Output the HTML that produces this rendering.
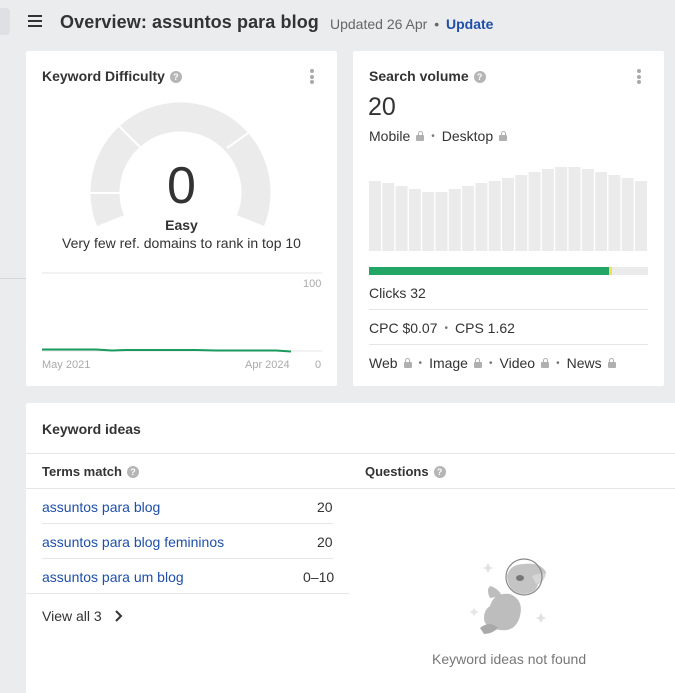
<!DOCTYPE html>
<html><head><meta charset="utf-8"><style>
*{margin:0;padding:0;box-sizing:border-box}
body{width:675px;height:681px;overflow:hidden;background:#ebecee;font-family:"Liberation Sans",Arial,sans-serif;color:#333;position:relative}
.a{position:absolute;white-space:nowrap}
.card{position:absolute;background:#fff;border-radius:2px}
.h{font-weight:bold;font-size:14px;color:#333}
.q{display:inline-block;width:12px;height:12px;border-radius:50%;background:#b5b5b5;color:#fff;font-size:9px;font-weight:bold;text-align:center;line-height:12px;vertical-align:1px;margin-left:5px}
.dots{position:absolute;width:4px}
.dots i{display:block;width:4px;height:4px;border-radius:50%;background:#aaa;margin-bottom:1.5px}
.lk{display:inline-block;width:8px;height:6px;background:#b0b0b0;border-radius:1px;position:relative;margin-left:6px;vertical-align:0}
.lk:before{content:"";position:absolute;left:1.5px;top:-4px;width:3px;height:4px;border:1.3px solid #b0b0b0;border-bottom:none;border-radius:3px 3px 0 0}
.dot{color:#777;margin:0 7px;font-size:10px;vertical-align:2px}
.t14{font-size:14px}
.blue{color:#1f4fa8}
</style></head><body>
<div class="a" style="left:0;top:8px;width:10px;height:27px;background:#dfe0e3;border-radius:0 4px 4px 0"></div>
<div class="a" style="left:0;top:278px;width:26px;height:1px;background:#d5d6d9"></div>
<div class="a" style="left:28px;top:15px;width:14px;height:2px;background:#333;box-shadow:0 5px 0 #333,0 10px 0 #333"></div>
<div class="a" style="left:60px;top:12px;font-size:18px;font-weight:bold;color:#333;letter-spacing:0.1px">Overview: assuntos para blog</div>
<div class="a" style="left:330px;top:16px;font-size:14px;color:#666">Updated 26 Apr <span style="margin:0 3px">•</span> <b style="color:#1f4fa8">Update</b></div>

<div class="card" style="left:26px;top:51px;width:311px;height:335px">
 <div class="a h" style="left:16px;top:17px">Keyword Difficulty<span class="q">?</span></div>
 <div class="dots" style="left:284px;top:18px"><i></i><i></i><i></i></div>
 <svg class="a" style="left:0;top:0" width="311" height="335">
  <path d="M 71 175 A 90 90 0 1 1 238 175 L 211.1 164.2 A 61 61 0 1 0 97.9 164.2 Z" fill="#ebebeb"/>
  <line x1="60" y1="142" x2="96" y2="142" stroke="#fff" stroke-width="2"/>
  <line x1="91" y1="73" x2="114" y2="96" stroke="#fff" stroke-width="2"/>
  <line x1="225" y1="80" x2="201" y2="97" stroke="#fff" stroke-width="2"/>
  <line x1="16" y1="222" x2="296" y2="222" stroke="#e6e6e6"/>
  <line x1="16" y1="300" x2="296" y2="300" stroke="#e6e6e6"/>
  <polyline points="16,298.5 70,298.5 86,299.5 100,299 170,299 190,299.5 250,299.5 265,300.5" fill="none" stroke="#1a9a5c" stroke-width="2"/>
 </svg>
 <div class="a" style="left:0;width:311px;text-align:center;top:105px;font-size:52px;color:#333">0</div>
 <div class="a" style="left:0;width:311px;text-align:center;top:166px;font-size:14px;font-weight:bold">Easy</div>
 <div class="a" style="left:0;width:311px;text-align:center;top:184px;font-size:14px">Very few ref. domains to rank in top 10</div>
 <div class="a" style="left:277px;top:227px;font-size:11px;color:#aaa">100</div>
 <div class="a" style="left:16px;top:308px;font-size:11px;color:#aaa">May 2021</div>
 <div class="a" style="left:219px;top:308px;font-size:11px;color:#aaa">Apr 2024</div>
 <div class="a" style="left:289px;top:308px;font-size:11px;color:#aaa">0</div>
</div>

<div class="card" style="left:353px;top:51px;width:311px;height:335px">
 <div class="a h" style="left:16px;top:17px">Search volume<span class="q">?</span></div>
 <div class="dots" style="left:284px;top:18px"><i></i><i></i><i></i></div>
 <div class="a" style="left:15px;top:42px;font-size:25px;color:#333">20</div>
 <div class="a t14" style="left:16px;top:77px">Mobile<span class="lk"></span><span class="dot">•</span>Desktop<span class="lk"></span></div>
 <svg class="a" style="left:16px;top:100px" width="280" height="110">
  <g fill="#ebebeb">
  <rect x="0" y="30" width="12" height="70"/><rect x="13.3" y="32" width="12" height="68"/><rect x="26.6" y="35" width="12" height="65"/><rect x="39.9" y="38" width="12" height="62"/><rect x="53.2" y="41" width="12" height="59"/><rect x="66.5" y="41" width="12" height="59"/><rect x="79.8" y="38" width="12" height="62"/><rect x="93.1" y="35" width="12" height="65"/><rect x="106.4" y="32" width="12" height="68"/><rect x="119.7" y="30" width="12" height="70"/><rect x="133" y="27" width="12" height="73"/><rect x="146.3" y="24" width="12" height="76"/><rect x="159.6" y="21" width="12" height="79"/><rect x="172.9" y="18" width="12" height="82"/><rect x="186.2" y="16" width="12" height="84"/><rect x="199.5" y="16" width="12" height="84"/><rect x="212.8" y="18" width="12" height="82"/><rect x="226.1" y="21" width="12" height="79"/><rect x="239.4" y="24" width="12" height="76"/><rect x="252.7" y="27" width="12" height="73"/><rect x="266" y="30" width="12" height="70"/>
  </g>
 </svg>
 <div class="a" style="left:16px;top:216px;width:279px;height:8px;background:#ebebeb"></div>
 <div class="a" style="left:16px;top:216px;width:240px;height:8px;background:#22a565"></div>
 <div class="a" style="left:256px;top:216px;width:3px;height:8px;background:#f2df5a"></div>
 <div class="a t14" style="left:16px;top:234px">Clicks 32</div>
 <div class="a" style="left:16px;top:258px;width:279px;height:1px;background:#e6e6e6"></div>
 <div class="a t14" style="left:16px;top:269px">CPC $0.07<span class="dot">•</span>CPS 1.62</div>
 <div class="a" style="left:16px;top:293px;width:279px;height:1px;background:#e6e6e6"></div>
 <div class="a t14" style="left:16px;top:304px">Web<span class="lk"></span><span class="dot">•</span>Image<span class="lk"></span><span class="dot">•</span>Video<span class="lk"></span><span class="dot">•</span>News<span class="lk"></span></div>
</div>

<div class="card" style="left:26px;top:403px;width:660px;height:290px">
 <div class="a h" style="left:16px;top:18px">Keyword ideas</div>
 <div class="a" style="left:0;top:50px;width:660px;height:1px;background:#e6e6e6"></div>
 <div class="a h" style="left:16px;top:61px;font-size:13px">Terms match<span class="q">?</span></div>
 <div class="a h" style="left:339px;top:61px;font-size:13px">Questions<span class="q">?</span></div>
 <div class="a" style="left:0;top:85px;width:660px;height:1px;background:#e6e6e6"></div>
 <div class="a t14 blue" style="left:16px;top:96px">assuntos para blog</div><div class="a t14" style="left:291px;top:96px">20</div>
 <div class="a" style="left:16px;top:120px;width:291px;height:1px;background:#e6e6e6"></div>
 <div class="a t14 blue" style="left:16px;top:131px">assuntos para blog femininos</div><div class="a t14" style="left:291px;top:131px">20</div>
 <div class="a" style="left:16px;top:155px;width:291px;height:1px;background:#e6e6e6"></div>
 <div class="a t14 blue" style="left:16px;top:166px">assuntos para um blog</div><div class="a t14" style="left:277px;top:166px">0–10</div>
 <div class="a" style="left:0;top:190px;width:323px;height:1px;background:#e6e6e6"></div>
 <div class="a t14" style="left:16px;top:205px">View all 3</div>
 <svg class="a" style="left:88px;top:206px" width="10" height="14"><path d="M2 2 L7 7 L2 12" fill="none" stroke="#333" stroke-width="2"/></svg>
 <svg class="a" style="left:440px;top:145px" width="90" height="90">
  <path d="M24 50 Q20 42 24 38 Q32 40 36 48 Z" fill="#bdbdbd"/>
  <path d="M24 58 Q28 44 44 46 Q58 52 54 68 Q50 84 34 82 Q18 80 18 70 Q18 62 24 58 Z" fill="#bdbdbd"/>
  <path d="M14 80 Q24 72 32 80 Q26 86 18 86 Z" fill="#a9a9a9"/>
  <path d="M41 28 Q44 16 58 16 Q74 14 80 24 Q78 34 72 36 Q70 46 56 46 Q42 44 41 28 Z" fill="#c4c4c4"/>
  <path d="M66 28 Q76 24 80 26 Q78 34 70 36 Z" fill="#d6d6d6"/>
  <ellipse cx="54" cy="30" rx="4" ry="3" fill="#777"/>
  <circle cx="58" cy="29" r="18" fill="none" stroke="#888" stroke-width="1.2"/>
  <path d="M22 15 l2 4 4 1 -4 1 -2 4 -2 -4 -4 -1 4 -1z" fill="#e0e0e0"/>
  <path d="M75 65 l2 4 4 1 -4 1 -2 4 -2 -4 -4 -1 4 -1z" fill="#e0e0e0"/>
  <path d="M8 60 l2 3 3 1 -3 1 -2 3 -2 -3 -3 -1 3 -1z" fill="#e6e6e6"/>
 </svg>
 <div class="a" style="left:406px;top:248px;font-size:14px;color:#777">Keyword ideas not found</div>
</div>
</body></html>
